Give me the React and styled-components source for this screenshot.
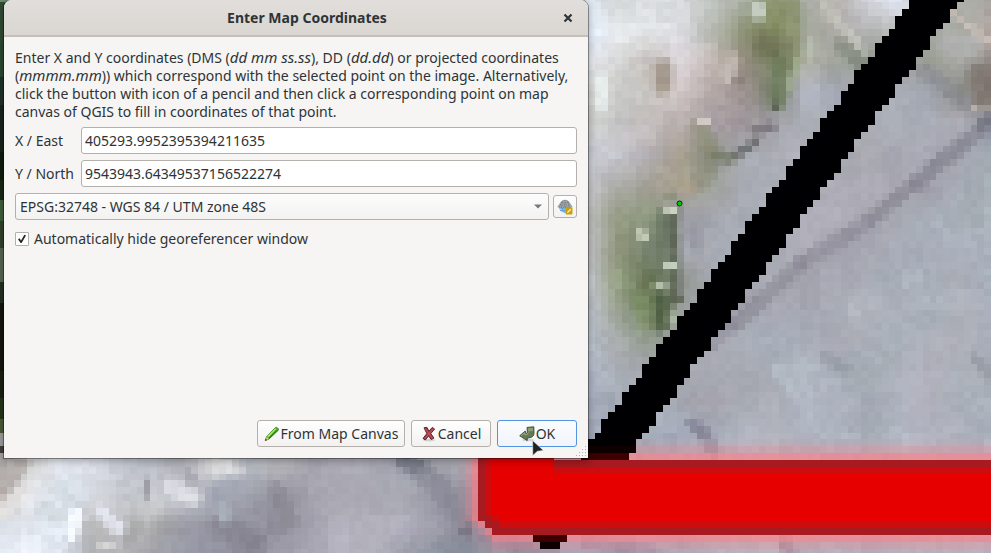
import React from 'react';
import styled, { createGlobalStyle } from 'styled-components';

/* ---------- aerial raster ---------- */

const W = 991;
const H = 553;
const CELL = 6.835;
const ROW_ORIGIN = 2;
const STEP = 31;

const rgb = (hex) => [0, 2, 4].map((i) => parseInt(hex.slice(i, i + 2), 16));
const table = (text) => text.trim().split('\n').map((row) => row.trim().split(/\s+/).map(rgb));

/* Ground colours right of x = 588, one sample every 31 px */
const EAST = table(`
e2eaf4 d4d8d6 dcdfe2 d8dcdc c0c4c0 a8b0a4 8c9470 a8aca4 b8b2ae d4d8de e4e8f4 b8bcc0 b0b2ac a8a4a0
e8f0ff e8ecee e0e4e6 dedee4 b4b8b0 909478 7c865a a0a498 b0aca8 b0b0b0 b8bab8 a8aaa8 a4a69c b4a8a4
e4e8ec d8d8d8 c4bcb8 dcd8dc c8bcb8 989084 74805f b0b0a8 a0a49c 8c9488 a0a4a8 9ca094 a8a8a4 8c8480
dcdedc ccccc8 c8c4c0 d4c8c8 b0a4a4 9c9090 7c8270 b4b8c4 a4a8b4 a8acb4 a8acb4 a0a4ae 84847f 8c8078
d0d0d0 c4c4c4 c4bcbc b8b0ac a49ca0 9c9498 a4a4ac aaacb4 a8acb4 acaeb6 a8acb4 a8abb6 b0b0b8 9092a0
ccced8 c4c4cc b4b0b4 a8a090 888c80 a8aab2 acaeb6 b4b4c0 a8aab2 a8aab0 a8a8b4 acacb8 a0a0ac a0a8b0
c8c8cc a8a8a4 a09c90 a8a08c a0a49c a8acb4 a8aab4 acacb6 b0aeb8 b0aeb8 aaa8b2 a09eaa a4a8b2 a8b0b8
c0c0c0 949c84 8c9880 a0a0a8 a4a6ae a8acb4 a8aab4 b0aeb8 b0aeb8 a8a6b0 a4a6b0 a8aeb8 a8b0b8 a8b0b8
c4c4c8 8c9078 76826e a8abb4 a4a8b0 a4a8b2 a8aab4 b0aeb8 a4a2ae a4a4b0 a8acb8 aaaeba acb2be a8aeba
c4c6cc 94a080 62704f 90948c a4a8b0 a8aab4 a8a8b2 a4a4ae a8a8b4 a8acb6 aab0ba acb2bc acaeb8 a8b0bc
c0c4cc 98a090 74885f 9ca09c a8acb4 a4a6b0 a8a8b4 a6a8b4 a8acb6 b4b6c0 acb0ba a8b0ba b0b2bc acb0bc
b8c0cc a8acac 90988c a4a6ac a8a8b2 a8acb6 a4acb8 a4a8b2 a8a8b4 acb0ba a8aeb8 b0b2bc b0b0ba a8aeba
b0b8c8 a8acb4 a4a8b0 a8aab4 a6a8b2 a8aab4 aaaeb8 b4bac4 a8aeb8 a2a8b0 acb0ba b0b0bc acb0ba a4a8b0
a8b0c0 a4acb8 a8aeb8 a4a6b0 a4a2ac a8acb4 aaacb6 b0b6c2 b0b4c0 a6aab4 b0b4c0 b0b0bc a8aeb8 acb2bc
a4a8b8 a4acb8 a4acba a4aaba a8aeba b0b4c0 b4b6c0 b0b4c0 aeb4c0 a6acb6 b0b6c2 b4b6c2 b0b2be a8b0bc
a4a8b8 a4acb8 a8acb8 a8acba aeb2be b0b4c0 b4b6c0 b0b4c0 aeb4c0 b0b0be b0b6c2 b4b6c2 b0b2be b4b8c4`);

/* Ground colours along the bottom, rows at y = 465, 496, 527, 558 */
const SOUTH = table(`
a8a4a0 d8d8d8 e4e8f0 dcdfe8 c8ccd4 b8bcc4 b0b0b8 dcdcdc b0b4bc b8b8bc a4a2ae aaa8b2 aaaab4 9c9fab a8a8b2 a8a8b2 a8a8b4
c8c0bc e8ecf0 d0d8e0 dde0e8 c0c4c8 c8ccd0 c4c6ce a8acb8 a0a2ae 93919c a4a2ac a8a6b0 acaab4 acacb6 9898a6 8c8c9a a8a8b4
dfe5ed dde3ea e8effa b8b8b8 c4c4c8 a8a8a8 9c9ca8 9494a0 8f8d99 92909c a4a2ae b4b2be b2b0ba b0aebb a09fab 84848f 9898a8
ecf0fa f4f8ff e0e4ee b0b4b8 b4b4b8 a0a0a8 9498a4 9090a0 8c8a96 9a98a4 acaab6 b4b2be b0b0ba 9c9ca8 9098a4 9094a0 9898a6`);

/* Dark vegetation at the left border: [bottom edge, colour] */
const WEST = [
  [5, '6c8c6c'], [40, '304c34'], [75, '2c4a30'], [105, '1f3428'], [150, '18241c'], [178, '101c10'],
  [200, '182814'], [222, '40603c'], [250, '30442c'], [285, '566856'], [300, '243024'], [370, '14150f'],
  [400, '1c2010'], [418, '24361a'], [436, '4c5c38'], [446, 'a0a0a0'], [456, '44403c'], [553, 'a8a6a4'],
].map(([y, c]) => [y, rgb(c)]);

/* Kerbs, cracks, shadows and light spots: x1 y1 x2 y2 half-width colour strength */
const MARKS = [
  [990, 122, 915, 184, 7, '80808c', 0.7], [915, 184, 870, 220, 6, '868490', 0.65],
  [870, 220, 800, 264, 7, '8c8a96', 0.6], [800, 264, 735, 325, 7, '8a8893', 0.6],
  [735, 325, 712, 345, 5, '8c8a96', 0.5], [962, 100, 925, 70, 7, '848890', 0.5],
  [991, 118, 982, 126, 4, '686a76', 0.6],
  [992, 106, 972, 106, 3, 'c4bebc', 0.7], [946, 8, 991, 44, 3, 'd0c4bc', 0.7],
  [949, 44, 972, 46, 10, 'b0b0b0', 0.8], [979, 75, 985, 98, 10, '7c746c', 0.7],
  [822, 2, 866, 54, 4, 'c8cac0', 0.6], [840, 46, 862, 62, 7, '7c8478', 0.6],
  [810, 46, 810, 54, 6, 'bcc4b4', 0.8], [758, 10, 758, 12, 7, 'ccd4cc', 0.9],
  [789, 8, 789, 60, 11, '848c64', 0.6], [765, 44, 780, 50, 11, '727458', 0.8],
  [782, 60, 778, 100, 8, '6c7c5c', 0.75], [796, 60, 790, 90, 3, 'a0ac90', 0.8],
  [774, 106, 776, 108, 4, '5c6054', 0.8], [755, 130, 771, 127, 5, '6c686c', 0.7],
  [755, 143, 737, 154, 4, '606464', 0.8], [730, 158, 718, 156, 6, '707464', 0.7],
  [708, 168, 700, 180, 9, '8c8c78', 0.55], [700, 126, 710, 150, 7, '8c8c74', 0.7],
  [683, 185, 690, 187, 7, 'aca08c', 0.7], [663, 68, 663, 86, 8, 'a09488', 0.85],
  [732, 60, 728, 76, 7, 'cabfbb', 0.7], [738, 80, 740, 82, 5, '888078', 0.7],
  [702, 121, 706, 121, 4, 'd4ccc8', 0.9], [670, 196, 670, 196, 4, '788468', 0.7],
  [661, 218, 665, 322, 7, '66745c', 0.7],
  [672, 220, 676, 300, 5, '586050', 0.85], [680, 205, 681, 290, 3, '8c908c', 0.6],
  [640, 300, 648, 322, 8, '7a8c64', 0.7], [670, 210, 672, 210, 4, 'ccd4c4', 1],
  [640, 232, 643, 236, 5, 'c0c8b4', 1], [668, 265, 672, 266, 4, 'c0ccbc', 1],
  [658, 285, 662, 285, 4, 'b4c0ac', 1], [660, 300, 660, 326, 6, '48583c', 0.7],
  [672, 317, 672, 321, 4, 'a4b4a0', 1],
  [693, 233, 697, 243, 8, '8c8c98', 0.5], [600, 80, 602, 104, 6, 'eef4f4', 0.7],
  [692, 423, 704, 434, 6, '7c8090', 0.7], [704, 434, 714, 452, 6, '8c8898', 0.6],
  [974, 358, 990, 378, 4, '92949e', 0.6], [826, 358, 846, 370, 5, '9498a2', 0.5],
  [776, 368, 802, 404, 5, 'b8c0ca', 0.6], [852, 310, 856, 314, 5, 'bcc0c8', 0.6],
  [405, 460, 420, 470, 8, '757885', 0.85], [428, 478, 452, 500, 11, '8a8b98', 0.8],
  [452, 500, 468, 530, 7, '858695', 0.75], [466, 530, 468, 532, 5, '6c6c7c', 0.9],
  [468, 545, 440, 553, 7, '8c90a0', 0.6], [485, 530, 520, 549, 9, '8c8c9c', 0.7],
  [215, 465, 236, 472, 7, 'e0e0e2', 0.85], [236, 480, 215, 494, 8, '9ca2b0', 0.6],
  [170, 488, 194, 498, 7, 'dddfe6', 0.9], [160, 505, 140, 520, 7, 'c8cacc', 0.7],
  [146, 482, 146, 494, 4, '9a9aa2', 0.9], [188, 474, 192, 478, 6, 'a4a4ac', 0.7],
  [276, 490, 290, 520, 7, '898791', 0.7], [222, 528, 250, 540, 11, '85838f', 0.7],
  [222, 508, 226, 518, 6, 'adb5c1', 0.7], [76, 512, 72, 536, 5, 'f4f8ff', 1],
  [86, 526, 88, 548, 5, 'b4b8bc', 0.7], [100, 510, 120, 530, 6, 'e8eaf6', 0.8],
  [136, 524, 128, 540, 6, 'a6a6a6', 0.7], [102, 546, 110, 546, 3, 'e0dedc', 0.9],
  [42, 508, 60, 518, 7, 'ccd4da', 0.8], [0, 490, 22, 465, 7, 'b0a8a4', 0.7],
  [0, 515, 24, 492, 6, 'e4e2e0', 0.8],
  [588, 543, 652, 553, 7, '9492a4', 0.7], [784, 540, 790, 553, 6, '9890a2', 0.7],
].map((m) => [...m.slice(0, 5), rgb(m[5]), m[6]]);

const mix = (a, b, t) => a.map((v, i) => v + (b[i] - v) * t);

function sample(grid, gx, gy) {
  const rows = grid.length - 1;
  const cols = grid[0].length - 1;
  const x = Math.max(0, Math.min(cols, gx));
  const y = Math.max(0, Math.min(rows, gy));
  const x0 = Math.min(cols - 1, Math.floor(x));
  const y0 = Math.min(rows - 1, Math.floor(y));
  return mix(
    mix(grid[y0][x0], grid[y0][x0 + 1], x - x0),
    mix(grid[y0 + 1][x0], grid[y0 + 1][x0 + 1], x - x0),
    y - y0,
  );
}

function distance(x, y, x1, y1, x2, y2) {
  const dx = x2 - x1;
  const dy = y2 - y1;
  const len = dx * dx + dy * dy || 1;
  const t = Math.max(0, Math.min(1, ((x - x1) * dx + (y - y1) * dy) / len));
  return Math.hypot(x - x1 - t * dx, y - y1 - t * dy);
}

function noise(c, r) {
  const n = Math.sin(c * 127.1 + r * 311.7) * 43758.5453;
  return n - Math.floor(n) - 0.5;
}

function ground(x, y, c, r) {
  if (x < 8 && y < 458) return WEST.find(([edge]) => y < edge)[1];
  let colour = x > 560 ? sample(EAST, (x - 588) / STEP, y / STEP) : sample(SOUTH, x / STEP, (y - 465) / STEP);
  MARKS.forEach(([x1, y1, x2, y2, w, tint, k]) => {
    const d = distance(x, y, x1, y1, x2, y2);
    if (d < w * 1.5) colour = mix(colour, tint, k * Math.min(1, (w * 1.5 - d) / (w * 0.8)));
  });
  const slate = Math.abs(colour[0] - colour[1]) < 5 && colour[0] < 185;
  const grain = noise(c, r) * (slate ? 6 : 10) + noise(Math.floor(c / 3) + 40, Math.floor(r / 3)) * 7;
  return colour.map((v) => v + grain);
}

/* Red band: depth in cells inside its rounded outline, negative outside */
function bandDepth(x, y) {
  const top = x < 553 ? 446 : 460;
  const dx = x - 478;
  const dy = Math.min(y - top, 535 - y);
  const corner = y > 505 ? (dx + (535 - y) - 20) * 0.75 : dx;
  return Math.floor(Math.min(dx, dy, corner) / CELL + 0.05);
}

function cellColour(c, r) {
  const x = (c + 0.5) * CELL;
  const y = ROW_ORIGIN + (r + 0.5) * CELL;
  let colour = ground(x, y, c, r);
  const left = 902 - 0.725 * (y - 12.3);
  const right = 957.3 - 0.729 * (y - 5.5);
  if (y < 460 && x > left && x < right) colour = [0, 0, 2];
  if (y > 535 && y < 542 && x > 533 && x < 567) colour = [10, 0, 0];
  if (y > 542 && y < 549 && x > 540 && x < 560) colour = [0, 0, 0];
  const depth = bandDepth(x, y);
  const dark = colour[0] < 20;
  if (depth >= 2) colour = [230, 0, 0];
  else if (depth === 1) colour = [203, 12, 14];
  else if (depth === 0) colour = [166, 26, 31];
  else if (depth === -1) colour = dark ? [60, 0, 0] : mix(colour, [255, 125, 135], 0.65);
  else if (depth === -2) colour = dark ? [14, 0, 0] : mix(colour, [255, 120, 130], 0.28);
  else if (depth === -3) colour = dark ? colour : mix(colour, [255, 120, 130], 0.08);
  return colour;
}

function rasterPaths() {
  const paths = new Map();
  const lastCol = Math.ceil(W / CELL);
  const lastRow = Math.ceil((H - ROW_ORIGIN) / CELL);
  for (let r = -1; r < lastRow; r += 1) {
    const y0 = Math.round(ROW_ORIGIN + r * CELL);
    const y1 = Math.round(ROW_ORIGIN + (r + 1) * CELL);
    for (let c = 0; c < lastCol; c += 1) {
      const x0 = Math.round(c * CELL);
      const x1 = Math.round((c + 1) * CELL);
      if (x0 > 8 && x1 < 580 && y1 < 450) continue;
      const q = cellColour(c, r).map((v) => Math.max(0, Math.min(255, Math.round(v / 2) * 2)));
      const key = `rgb(${q.join(',')})`;
      paths.set(key, `${paths.get(key) || ''}M${x0} ${y0}H${x1}V${y1}H${x0}Z`);
    }
  }
  return [...paths];
}

const RASTER = rasterPaths();

/* ---------- styles ---------- */

const GlobalStyle = createGlobalStyle`
  * { box-sizing: border-box; }
  body { margin: 0; background: #a8abb4; }
  body, button, input, select {
    font-family: "Noto Sans", "Open Sans", sans-serif;
    font-size: 14px;
    line-height: 18px;
    color: #2e3436;
  }
`;

const Desktop = styled.main`
  position: relative;
  min-height: 100vh;
  padding: 0 4px;
  overflow: hidden;
`;

const MapCanvas = styled.svg`
  position: absolute;
  inset: 0;
  width: 100%;
  height: 100%;
`;

const Dialog = styled.section`
  position: relative;
  display: flex;
  flex-direction: column;
  width: 100%;
  max-width: 584px;
  min-height: 458px;
  background: #f6f5f4;
  border-radius: 8px 8px 0 0;
  box-shadow: 0 0 0 1px rgba(0, 0, 0, 0.35), 0 2px 8px 1px rgba(0, 0, 0, 0.3);
`;

const TitleBar = styled.header`
  display: grid;
  grid-template-columns: 62px 1fr 40px;
  align-items: center;
  height: 37px;
  border-bottom: 2px solid #c4bfba;
  border-radius: 8px 8px 0 0;
  background: linear-gradient(#e1dedb, #dad6d2);
`;

const Title = styled.h1`
  grid-column: 2;
  margin: 0;
  font-size: 14px;
  font-weight: 700;
  line-height: 20px;
  text-align: center;
`;

const CloseButton = styled.button`
  display: grid;
  place-items: center;
  height: 32px;
  padding: 0;
  border: 0;
  background: none;
`;

const Form = styled.form`
  flex: 1;
  display: flex;
  flex-direction: column;
  gap: 6px;
  padding: 12px 11px 11px;
`;

const Help = styled.p`
  margin: 0;
  white-space: nowrap;
`;

const Format = styled.i`
  font-size: 15px;
  line-height: 16px;
`;

const Fields = styled.div`
  display: grid;
  grid-template-columns: 60px 1fr;
  align-items: center;
  gap: 6px;
`;

const FieldLabel = styled.label`
  white-space: nowrap;
`;

const TextBox = styled.input`
  width: 100%;
  height: 27px;
  padding: 0 3px;
  border: 1px solid #b4b0ac;
  border-radius: 3px;
  background: #fff;
  outline: 0;
`;

const CrsRow = styled.div`
  display: flex;
  align-items: center;
  gap: 4px;
`;

const SelectWrap = styled.div`
  flex: 1;
  display: grid;
  align-items: center;

  > * { grid-area: 1 / 1; }
  > svg { justify-self: end; margin-right: 7px; pointer-events: none; }
`;

const Select = styled.select`
  appearance: none;
  width: 100%;
  height: 27px;
  padding: 0 24px 0 4px;
  border: 1px solid #b4b0ac;
  border-radius: 3px;
  background: linear-gradient(#fdfdfd, #f3f2f1);
`;

const Button = styled.button`
  display: inline-flex;
  align-items: center;
  justify-content: center;
  gap: 1px;
  height: ${(p) => (p.$tool ? '23px' : '27px')};
  width: ${(p) => p.$width};
  padding: 0;
  border: 1px solid ${(p) => (p.$primary ? '#5294e2' : '#b4b0ac')};
  border-radius: 3px;
  background: ${(p) => (p.$primary ? 'linear-gradient(#fbfcff, #f0f4fa)' : 'linear-gradient(#fefefe, #f3f2f1)')};
  white-space: nowrap;
`;

const CheckRow = styled.label`
  display: flex;
  align-items: center;
  gap: 5px;
  height: 25px;
`;

const CheckWrap = styled.span`
  display: grid;
  place-items: center;

  > * { grid-area: 1 / 1; }
  > svg { visibility: hidden; pointer-events: none; }
  > input:checked + svg { visibility: visible; }
`;

const CheckBox = styled.input`
  appearance: none;
  width: 14px;
  height: 14px;
  margin: 0;
  border: 1px solid #b4b0ac;
  border-radius: 1px;
  background: #fff;
`;

const Actions = styled.footer`
  display: flex;
  justify-content: flex-end;
  gap: 6px;
  margin-top: auto;
`;

const Grip = styled.svg`
  position: absolute;
  right: 1px;
  bottom: 1px;
`;

const Pointer = styled.svg`
  position: absolute;
  right: 44px;
  bottom: 0;
  pointer-events: none;
`;

/* ---------- icons ---------- */

const CloseIcon = () => (
  <svg width="10" height="10" viewBox="0 0 10 10" aria-hidden="true">
    <path d="M1.5 1.5L8.5 8.5M8.5 1.5L1.5 8.5" stroke="#2e3436" strokeWidth="2.2" />
  </svg>
);

const ArrowIcon = () => (
  <svg width="8" height="5" viewBox="0 0 8 5" aria-hidden="true">
    <path d="M0 .5H8L4 4.5Z" fill="#77797a" />
  </svg>
);

const TickIcon = () => (
  <svg width="10" height="10" viewBox="0 0 10 10" aria-hidden="true">
    <path d="M1 5.2L2.6 4.2L4 6.4L7.4 .8L9 1.4L4.6 9H3.6Z" fill="#222829" />
  </svg>
);

const GlobeIcon = () => (
  <svg width="16" height="16" viewBox="0 0 16 16" aria-hidden="true">
    <circle cx="8" cy="7.5" r="6.3" fill="#9cc5e8" />
    <path d="M2 8.5Q8 11.5 14 8.5M5 9Q5.5 12 8 13.5M10.5 9Q10 12 8 13.5M3 11.5H13" fill="none" stroke="#5d9ad0" strokeWidth=".8" />
    <path d="M.3 8.3Q1 6.2 3 4.6Q4.6 1 8 .8Q11.4 1 13 4.6Q15 6.2 15.7 8.3Q8 10 .3 8.3Z" fill="#a4a7a9" />
    <path d="M2 7.8Q8 9 14 7.8M3 5.5Q8 6.8 13 5.5M4.5 3.4Q8 4.4 11.5 3.4M8 1V9M5.8 1.8Q4 4.5 4.2 8.5M10.2 1.8Q12 4.5 11.8 8.5" fill="none" stroke="#62676a" strokeWidth=".8" strokeDasharray="1 1" />
    <rect x="8.5" y="8.5" width="7" height="7" rx="1" fill="#c9a10c" />
    <path d="M10 14L10.5 12.5L13.5 9.8L14.3 10.5L11.4 13.5Z" fill="#fff6c8" />
  </svg>
);

const PencilIcon = () => (
  <svg width="16" height="16" viewBox="0 0 16 16" aria-hidden="true">
    <path d="M1.3 14.5L2.6 10.8L11.4 1.7Q12.4 1 13.5 2L14.2 2.7Q14.9 3.6 14 4.5L5 13Z" fill="#48bd18" stroke="#287018" strokeWidth=".9" />
    <path d="M3.8 10.8L11.8 2.6" stroke="#b8f060" strokeWidth="1.3" />
    <path d="M4.9 12.2L13.4 4" stroke="#237b10" strokeWidth="1" />
    <path d="M2.7 10.8L4.9 12.9L1.3 14.5Z" fill="#e9c792" />
    <path d="M1 14.8L1.8 12.8L3 13.9Z" fill="#293018" />
  </svg>
);

const CancelIcon = () => (
  <svg width="16" height="16" viewBox="0 0 16 16" aria-hidden="true">
    <ellipse cx="8" cy="14" rx="6" ry="1.4" fill="#000" opacity=".14" />
    <path d="M3 1.8L5.9 1.3L8 5.2L11.3 1.4L13.6 3L9.8 7.6L12.9 12.1L10.2 13.5L7.6 9.9L4.3 14L2 12.4L5.8 7.6Z" fill="#a83c46" stroke="#541d24" strokeWidth=".9" strokeLinejoin="round" />
    <path d="M4.2 2.7L11.4 12.3M12 3L4 12.4" stroke="#cb626a" strokeWidth=".7" />
  </svg>
);

const OkIcon = () => (
  <svg width="16" height="16" viewBox="0 0 16 16" aria-hidden="true">
    <ellipse cx="9" cy="14" rx="6" ry="1.3" fill="#000" opacity=".13" />
    <path d="M8 1.4L14.8 .8L15 7.5Q14.8 11.8 8.4 12L8.2 14.6L.7 9.8L6.3 5L6.5 7.6Q8.3 7.6 8.4 6Z" fill="#657a52" stroke="#3c4933" strokeWidth=".9" strokeLinejoin="round" />
    <path d="M8.8 2.2L14 1.8V5L9.2 5.4Z" fill="#8a9e74" />
    <path d="M2 9.8L5.8 6.6V8.7Q9 8.8 9.4 6.4" fill="none" stroke="#a8ba94" strokeWidth=".8" />
  </svg>
);

const gripDots = [[10, 1], [7, 4], [10, 4], [4, 7], [7, 7], [10, 7], [1, 10], [4, 10], [7, 10], [10, 10]];

export default function App() {
  return (
    <Desktop>
      <GlobalStyle />
      <MapCanvas viewBox={`0 0 ${W} ${H}`} preserveAspectRatio="xMinYMin slice" shapeRendering="crispEdges" aria-hidden="true">
        {RASTER.map(([fill, d]) => <path key={fill} d={d} fill={fill} />)}
        <circle cx="679.5" cy="203.5" r="2.5" fill="#00c800" stroke="#082808" shapeRendering="auto" />
      </MapCanvas>

      <Dialog role="dialog" aria-labelledby="dialog-title">
        <TitleBar>
          <Title id="dialog-title">Enter Map Coordinates</Title>
          <CloseButton type="button" aria-label="Close"><CloseIcon /></CloseButton>
        </TitleBar>
        <Form onSubmit={(e) => e.preventDefault()}>
          <Help>
            Enter X and Y coordinates (DMS (<Format>dd mm ss.ss</Format>), DD (<Format>dd.dd</Format>) or projected coordinates<br />
            (<Format>mmmm.mm</Format>)) which correspond with the selected point on the image. Alternatively,<br />
            click the button with icon of a pencil and then click a corresponding point on map<br />
            canvas of QGIS to fill in coordinates of that point.
          </Help>
          <Fields>
            <FieldLabel htmlFor="east">X / East</FieldLabel>
            <TextBox id="east" defaultValue="405293.9952395394211635" />
            <FieldLabel htmlFor="north">Y / North</FieldLabel>
            <TextBox id="north" defaultValue="9543943.64349537156522274" />
          </Fields>
          <CrsRow>
            <SelectWrap>
              <Select aria-label="Coordinate reference system">
                <option>EPSG:32748 - WGS 84 / UTM zone 48S</option>
              </Select>
              <ArrowIcon />
            </SelectWrap>
            <Button type="button" $tool $width="24px" aria-label="Select CRS"><GlobeIcon /></Button>
          </CrsRow>
          <CheckRow>
            <CheckWrap>
              <CheckBox type="checkbox" defaultChecked />
              <TickIcon />
            </CheckWrap>
            Automatically hide georeferencer window
          </CheckRow>
          <Actions>
            <Button type="button" $width="148px"><PencilIcon />From Map Canvas</Button>
            <Button type="button" $width="80px"><CancelIcon />Cancel</Button>
            <Button type="submit" $width="80px" $primary><OkIcon />OK</Button>
          </Actions>
        </Form>
        <Grip width="12" height="12" viewBox="0 0 12 12" aria-hidden="true">
          {gripDots.map(([x, y]) => <rect key={`${x}-${y}`} x={x} y={y} width="1" height="1" fill="#b2afac" />)}
        </Grip>
        <Pointer width="12" height="18" viewBox="0 0 12 18" aria-hidden="true">
          <path d="M.6 .6L11.4 10.4L5.4 11.2L.8 15.4Z" fill="#1e2324" stroke="#f6f5f4" strokeWidth=".5" />
        </Pointer>
      </Dialog>
    </Desktop>
  );
}
